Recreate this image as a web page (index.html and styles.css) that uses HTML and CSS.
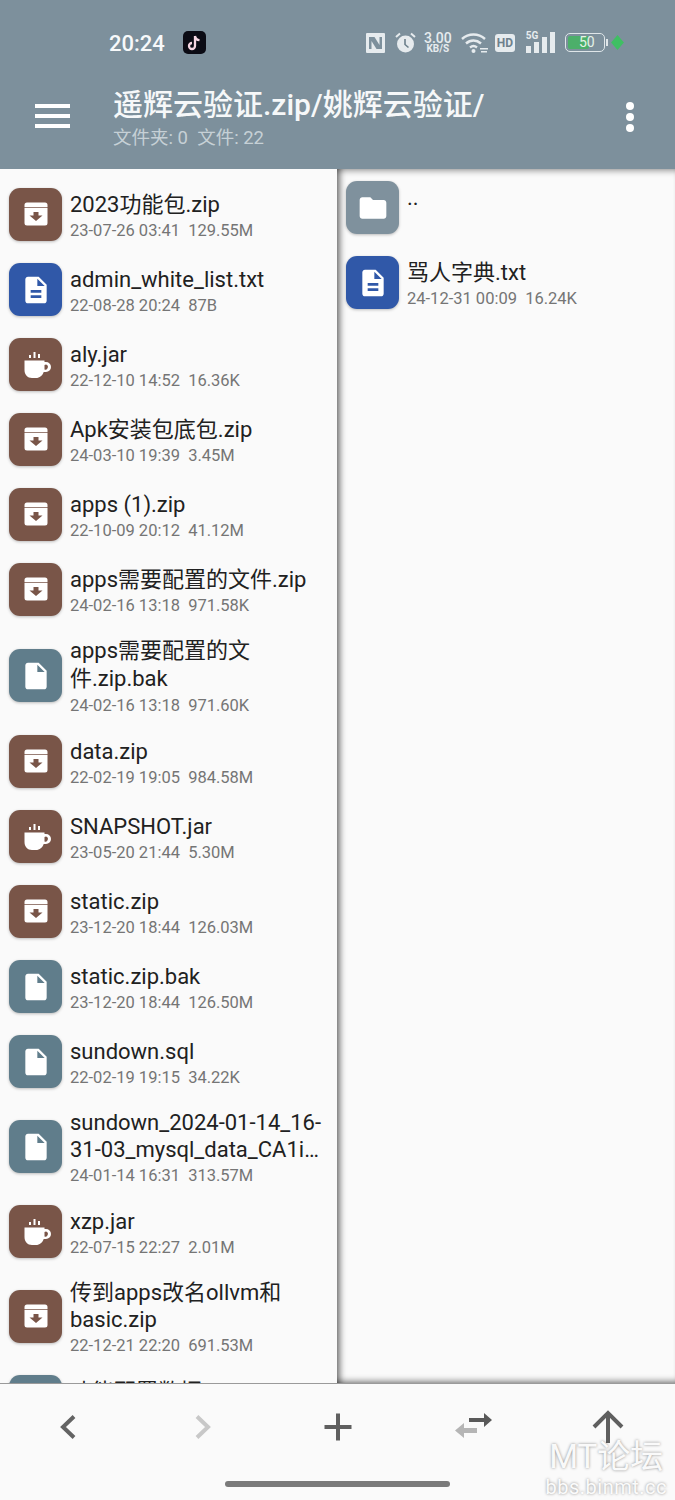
FILE: index.html
```html
<!DOCTYPE html>
<html lang="en">
<head>
    <meta charset="UTF-8">
    <meta name="viewport" content="width=device-width, initial-scale=1.0">
    <title>MT Manager</title>
    <link rel="stylesheet" href="styles.css">
</head>
<body>
    <svg class="defs" width="0" height="0">
        <symbol id="i-zip" viewBox="0 0 32 32">
            <path fill="#fff" fill-rule="evenodd" d="M7 3.500h18a2.500 2.500 0 0 1 2.500 2.500v18a2.500 2.500 0 0 1-2.500 2.500H7A2.500 2.500 0 0 1 4.500 24V6A2.500 2.500 0 0 1 7 3.500zM4.500 8v.8h23V8zM13.500 13v3.500H9.500l6.500 5.500 6.500-5.500h-4V13z"/>
        </symbol>
        <symbol id="i-txt" viewBox="0 0 24 24">
            <path fill="#fff" fill-rule="evenodd" d="M14 2H6c-1.100 0-2 .9-2 2v16c0 1.100.9 2 2 2h12c1.100 0 2-.9 2-2V8l-6-6zm2 16H8v-2h8v2zm0-4H8v-2h8v2zm-3-5V3.500L18.500 9H13z"/>
        </symbol>
        <symbol id="i-file" viewBox="0 0 24 24">
            <path fill="#fff" fill-rule="evenodd" d="M14 2H6c-1.100 0-2 .9-2 2v16c0 1.100.9 2 2 2h12c1.100 0 2-.9 2-2V8l-6-6zm-1 7V3.500L18.500 9H13z"/>
        </symbol>
        <symbol id="i-folder" viewBox="0 0 24 24">
            <path fill="#fff" d="M10 4H4c-1.100 0-2 .9-2 2v12c0 1.100.9 2 2 2h16c1.100 0 2-.9 2-2V8c0-1.100-.9-2-2-2h-8l-2-2z"/>
        </symbol>
        <symbol id="i-jar" viewBox="0 0 32 32">
            <path fill="#fff" fill-rule="evenodd" d="M4.500 11.500h20v1.500h1.500a5 5 0 0 1 0 10h-2.300c-1.200 3.500-4 6-7.700 6h-4c-4.500 0-7.500-3.500-7.500-8zM26 15.500a2.500 2.500 0 0 0-1.500.5v4.500a2.500 2.500 0 1 0 1.500-5z"/>
            <path fill="#fff" d="M9 6h2v3H9zM13.500 3h2v6h-2zM18 5h2v4h-2z"/>
        </symbol>
    </svg>

    <div class="app">
        <header class="header">
            <div class="statusbar">
                <span class="clock">20:24</span>
                <svg class="tiktok" width="23" height="23" viewBox="0 0 23 23">
                    <rect width="23" height="23" rx="5" fill="#0b0b14"/>
                    <path fill="none" stroke="#f5d6e2" stroke-width="2.300" d="M12 5v10a3 3 0 1 1-3-3M12 5c.3 2.500 2 4 4.500 4.200"/>
                </svg>
                <div class="status-icons">
                    <svg class="nfc" width="19" height="20" viewBox="0 0 19 20">
                        <path fill="#e6ebee" fill-rule="evenodd" d="M1 0h17a1 1 0 0 1 1 1v18a1 1 0 0 1-1 1H1a1 1 0 0 1-1-1V1a1 1 0 0 1 1-1zM3 4v12h2.500V8l5 8H16V4h-2.500v8l-5-8z"/>
                    </svg>
                    <svg class="alarm" width="21" height="21" viewBox="0 0 21 21">
                        <circle cx="10.500" cy="12" r="8.500" fill="#e6ebee"/>
                        <path fill="none" stroke="#e6ebee" stroke-width="2" d="M1 5l4-3.500M20 5l-4-3.500"/>
                        <path fill="none" stroke="#6d808c" stroke-width="1.600" d="M10 7v5.500l3.500 3"/>
                    </svg>
                    <div class="speed">
                        <span class="speed-num">3.00</span>
                        <span class="speed-unit">KB/S</span>
                    </div>
                    <svg class="wifi" width="27" height="21" viewBox="0 0 27 21">
                        <path fill="none" stroke="#e6ebee" stroke-width="2.400" d="M1 7c6.500-6 16.500-6 23 0M5 11.500c4.500-4 10.500-4 15 0M9 15.500c2.500-2 4.500-2 7 0"/>
                        <circle cx="12.500" cy="19" r="2" fill="#e6ebee"/>
                        <path fill="#e6ebee" d="M19 16h8v1.500h-8zM20 19h6v1.500h-6z"/>
                    </svg>
                    <span class="hd">HD</span>
                    <div class="signal">
                        <span class="signal-5g">5G</span>
                        <svg width="30" height="21" viewBox="0 0 30 21">
                            <path fill="#e6ebee" d="M0 14h5v7H0z"/>
                            <path fill="#e6ebee" d="M8 10h5v11H8z"/>
                            <path fill="#e6ebee" d="M16 5h5v16h-5z"/>
                            <path fill="#e6ebee" d="M24 0h5v21h-5z"/>
                        </svg>
                    </div>
                    <div class="battery">
                        <div class="battery-body">
                            <div class="battery-fill"></div>
                            <span class="battery-num">50</span>
                        </div>
                        <div class="battery-cap"></div>
                    </div>
                    <svg class="bolt" width="13" height="15" viewBox="0 0 12 14">
                        <path fill="#3fbf63" d="M6 0l6 7-6 7-6-7z"/>
                    </svg>
                </div>
            </div>
            <div class="appbar">
                <div class="menu-btn">
                    <span></span>
                    <span></span>
                    <span></span>
                </div>
                <div class="path">
                    <div class="path-title">遥辉云验证.zip/姚辉云验证/</div>
                    <div class="path-sub">文件夹: 0  文件: 22</div>
                </div>
                <div class="more-btn">
                    <span></span>
                    <span></span>
                    <span></span>
                </div>
            </div>
        </header>

        <main class="panes">
            <section class="pane pane-left">
                <div class="row">
                    <div class="icon brown"><svg class="glyph"><use href="#i-zip"/></svg></div>
                    <div class="info"><div class="name">2023功能包.zip</div><div class="meta">23-07-26 03:41  129.55M</div></div>
                </div>
                <div class="row">
                    <div class="icon blue"><svg class="glyph"><use href="#i-txt"/></svg></div>
                    <div class="info"><div class="name">admin_white_list.txt</div><div class="meta">22-08-28 20:24  87B</div></div>
                </div>
                <div class="row">
                    <div class="icon brown"><svg class="glyph"><use href="#i-jar"/></svg></div>
                    <div class="info"><div class="name">aly.jar</div><div class="meta">22-12-10 14:52  16.36K</div></div>
                </div>
                <div class="row">
                    <div class="icon brown"><svg class="glyph"><use href="#i-zip"/></svg></div>
                    <div class="info"><div class="name">Apk安装包底包.zip</div><div class="meta">24-03-10 19:39  3.45M</div></div>
                </div>
                <div class="row">
                    <div class="icon brown"><svg class="glyph"><use href="#i-zip"/></svg></div>
                    <div class="info"><div class="name">apps (1).zip</div><div class="meta">22-10-09 20:12  41.12M</div></div>
                </div>
                <div class="row">
                    <div class="icon brown"><svg class="glyph"><use href="#i-zip"/></svg></div>
                    <div class="info"><div class="name">apps需要配置的文件.zip</div><div class="meta">24-02-16 13:18  971.58K</div></div>
                </div>
                <div class="row">
                    <div class="icon slate"><svg class="glyph"><use href="#i-file"/></svg></div>
                    <div class="info"><div class="name tall">apps需要配置的文件.zip.bak</div><div class="meta">24-02-16 13:18  971.60K</div></div>
                </div>
                <div class="row">
                    <div class="icon brown"><svg class="glyph"><use href="#i-zip"/></svg></div>
                    <div class="info"><div class="name">data.zip</div><div class="meta">22-02-19 19:05  984.58M</div></div>
                </div>
                <div class="row">
                    <div class="icon brown"><svg class="glyph"><use href="#i-jar"/></svg></div>
                    <div class="info"><div class="name">SNAPSHOT.jar</div><div class="meta">23-05-20 21:44  5.30M</div></div>
                </div>
                <div class="row">
                    <div class="icon brown"><svg class="glyph"><use href="#i-zip"/></svg></div>
                    <div class="info"><div class="name">static.zip</div><div class="meta">23-12-20 18:44  126.03M</div></div>
                </div>
                <div class="row">
                    <div class="icon slate"><svg class="glyph"><use href="#i-file"/></svg></div>
                    <div class="info"><div class="name">static.zip.bak</div><div class="meta">23-12-20 18:44  126.50M</div></div>
                </div>
                <div class="row">
                    <div class="icon slate"><svg class="glyph"><use href="#i-file"/></svg></div>
                    <div class="info"><div class="name">sundown.sql</div><div class="meta">22-02-19 19:15  34.22K</div></div>
                </div>
                <div class="row">
                    <div class="icon slate"><svg class="glyph"><use href="#i-file"/></svg></div>
                    <div class="info"><div class="name">sundown_2024-01-14_16-31-03_mysql_data_CA1i…</div><div class="meta">24-01-14 16:31  313.57M</div></div>
                </div>
                <div class="row">
                    <div class="icon brown"><svg class="glyph"><use href="#i-jar"/></svg></div>
                    <div class="info"><div class="name">xzp.jar</div><div class="meta">22-07-15 22:27  2.01M</div></div>
                </div>
                <div class="row">
                    <div class="icon brown"><svg class="glyph"><use href="#i-zip"/></svg></div>
                    <div class="info"><div class="name">传到apps改名ollvm和basic.zip</div><div class="meta">22-12-21 22:20  691.53M</div></div>
                </div>
                <div class="row">
                    <div class="icon slate"><svg class="glyph"><use href="#i-file"/></svg></div>
                    <div class="info"><div class="name">功能配置数据.sql</div><div class="meta">&nbsp;</div></div>
                </div>
            </section>
            <section class="pane pane-right">
                <div class="row">
                    <div class="icon grey"><svg class="glyph"><use href="#i-folder"/></svg></div>
                    <div class="info"><div class="name">..</div><div class="meta">&nbsp;</div></div>
                </div>
                <div class="row">
                    <div class="icon blue"><svg class="glyph"><use href="#i-txt"/></svg></div>
                    <div class="info"><div class="name">骂人字典.txt</div><div class="meta">24-12-31 00:09  16.24K</div></div>
                </div>
            </section>
        </main>

        <footer class="toolbar">
            <div class="tools">
                <div class="tool">
                    <svg width="30" height="30" viewBox="0 0 30 30"><path fill="none" stroke="#636363" stroke-width="4" d="M21 4.500L10 15l11 10.500"/></svg>
                </div>
                <div class="tool">
                    <svg width="30" height="30" viewBox="0 0 30 30"><path fill="none" stroke="#c8c8c8" stroke-width="4" d="M9 4.500L20 15 9 25.500"/></svg>
                </div>
                <div class="tool">
                    <svg width="30" height="30" viewBox="0 0 30 30"><path fill="none" stroke="#5f5f5f" stroke-width="4" d="M15 1.500v27M1.500 15h27"/></svg>
                </div>
                <div class="tool">
                    <svg width="40" height="30" viewBox="0 0 40 30">
                        <path fill="#595959" d="M16 6h15V1l8 7-8 7v-5H16z"/>
                        <path fill="#b5b5b5" d="M24 16H11v-5l-9 7.500L11 26v-5h13z"/>
                    </svg>
                </div>
                <div class="tool">
                    <svg width="32" height="34" viewBox="0 0 32 34"><path fill="none" stroke="#5f5f5f" stroke-width="4" d="M16 33V3M2 17L16 3l14 14"/></svg>
                </div>
            </div>
            <div class="home-bar"></div>
            <div class="watermark">
                <div class="wm-title">MT论坛</div>
                <div class="wm-url">bbs.binmt.cc</div>
            </div>
        </footer>
    </div>
</body>
</html>
```

FILE: styles.css
```css
* {
    box-sizing: border-box;
}
body {
    margin: 0;
    font-family: Roboto, "Noto Sans CJK SC", sans-serif;
    background: #fafafa;
}
.defs {
    position: absolute;
}
.app {
    width: 675px;
    height: 1500px;
    display: flex;
    flex-direction: column;
    overflow: hidden;
}

/* header */
.header {
    height: 169px;
    flex: none;
    background: #7d909c;
    color: #fff;
}
.statusbar {
    height: 60px;
    padding: 26px 0 0 109px;
    display: flex;
    align-items: flex-start;
}
.clock {
    font-size: 22px;
    font-weight: 500;
    line-height: 35px;
    color: #f7f9fa;
}
.tiktok {
    margin: 5px 0 0 18px;
}
.status-icons {
    margin: 6px 0 0 160px;
    display: flex;
    align-items: center;
    height: 21px;
    color: #e6ebee;
}
.alarm {
    margin-left: 10px;
}
.speed {
    margin-left: 6px;
    width: 32px;
    display: flex;
    flex-direction: column;
    align-items: center;
}
.speed-num {
    font-size: 14px;
    font-weight: 500;
    line-height: 12px;
}
.speed-unit {
    font-size: 10px;
    font-weight: 700;
    line-height: 10px;
}
.wifi {
    margin-left: 7px;
}
.hd {
    margin-left: 7px;
    width: 20px;
    height: 18px;
    border-radius: 3px;
    background: #e6ebee;
    color: #6d808c;
    font-size: 12px;
    font-weight: 700;
    line-height: 18px;
    text-align: center;
}
.signal {
    margin-left: 11px;
    width: 30px;
    height: 21px;
    position: relative;
}
.signal-5g {
    position: absolute;
    left: 0;
    top: -2px;
    font-size: 10px;
    font-weight: 700;
    line-height: 11px;
    background: #7d909c;
    padding-right: 1px;
}
.battery {
    margin-left: 9px;
    display: flex;
    align-items: center;
}
.battery-body {
    width: 40px;
    height: 19px;
    border: 1.500px solid #dfe6e9;
    border-radius: 5px;
    position: relative;
    padding: 2px;
}
.battery-fill {
    width: 21px;
    height: 100%;
    background: #4caf6a;
    border-radius: 2px;
}
.battery-num {
    position: absolute;
    left: 0;
    right: 0;
    top: 0;
    padding-left: 4px;
    text-align: center;
    font-size: 14px;
    line-height: 16px;
    color: #e4f2e6;
}
.battery-cap {
    width: 2px;
    height: 7px;
    background: #dfe6e9;
    margin-left: 1px;
}
.bolt {
    margin-left: 3px;
}
.appbar {
    height: 109px;
    padding-left: 35px;
    display: flex;
    align-items: flex-start;
}
.menu-btn {
    width: 35px;
    margin-top: 44px;
    display: flex;
    flex-direction: column;
    gap: 6px;
    flex: none;
}
.menu-btn span {
    height: 4px;
    background: #fff;
}
.path {
    margin-left: 43px;
    margin-top: 24px;
    flex: 1;
}
.path-title {
    font-size: 30px;
    font-weight: 500;
    line-height: 42px;
    color: #f6f8f9;
}
.path-sub {
    font-size: 18.500px;
    line-height: 24px;
    white-space: pre;
    color: #c6d0d6;
}
.more-btn {
    margin: 42px 41px 0 0;
    display: flex;
    flex-direction: column;
    gap: 3px;
    flex: none;
}
.more-btn span {
    width: 8px;
    height: 8px;
    border-radius: 50%;
    background: #fff;
}

/* file panes */
.panes {
    flex: 1;
    display: flex;
    min-height: 0;
}
.pane {
    overflow: hidden;
}
.pane-left {
    width: 337px;
    flex: none;
    padding-top: 8px;
    background: #fafafa;
}
.pane-right {
    flex: 1;
    padding-top: 1px;
    background: #fafafa;
    box-shadow: inset 7px 0 6px -4px rgba(0,0,0,0.55),
                inset 0 7px 6px -5px rgba(0,0,0,0.35),
                inset 0 -7px 6px -5px rgba(0,0,0,0.45);
}
.row {
    min-height: 75px;
    padding: 10px 8px 6px 9px;
    display: flex;
    align-items: center;
    gap: 8px;
}
.icon {
    width: 53px;
    height: 53px;
    flex: none;
    border-radius: 11px;
    box-shadow: 0 1px 3px rgba(0,0,0,0.25);
    margin-top: -4px;
    display: flex;
    align-items: center;
    justify-content: center;
}
.brown { background: #795548; }
.blue { background: #3058a8; }
.slate { background: #607d8b; }
.grey { background: #7f919d; }
.glyph {
    width: 32px;
    height: 32px;
}
.info {
    flex: 1;
    min-width: 0;
}
.name {
    font-size: 22px;
    line-height: 27px;
    color: #212121;
    overflow-wrap: anywhere;
}
.name.tall {
    line-height: 28px;
}
.meta {
    font-size: 16.500px;
    line-height: 24px;
    padding-top: 1px;
    box-sizing: content-box;
    white-space: pre;
    color: #757575;
}

/* bottom toolbar */
.toolbar {
    height: 117px;
    flex: none;
    background: #fafafa;
    border-top: 1px solid #9a9a9a;
    position: relative;
}
.tools {
    display: flex;
    padding-top: 28px;
}
.tool {
    width: 135px;
    height: 30px;
    display: flex;
    align-items: center;
    justify-content: center;
}
.home-bar {
    width: 225px;
    height: 6px;
    margin: 39px auto 0;
    border-radius: 3px;
    background: #7a7a7a;
}
.watermark {
    position: absolute;
    right: 8px;
    top: 54px;
    text-align: center;
    color: rgba(255,255,255,0.95);
    text-shadow: 0 0 3px rgba(0,0,0,0.45);
}
.wm-title {
    font-size: 33px;
    line-height: 38px;
}
.wm-url {
    font-size: 20px;
    line-height: 22px;
    letter-spacing: 0.5px;
}
```
